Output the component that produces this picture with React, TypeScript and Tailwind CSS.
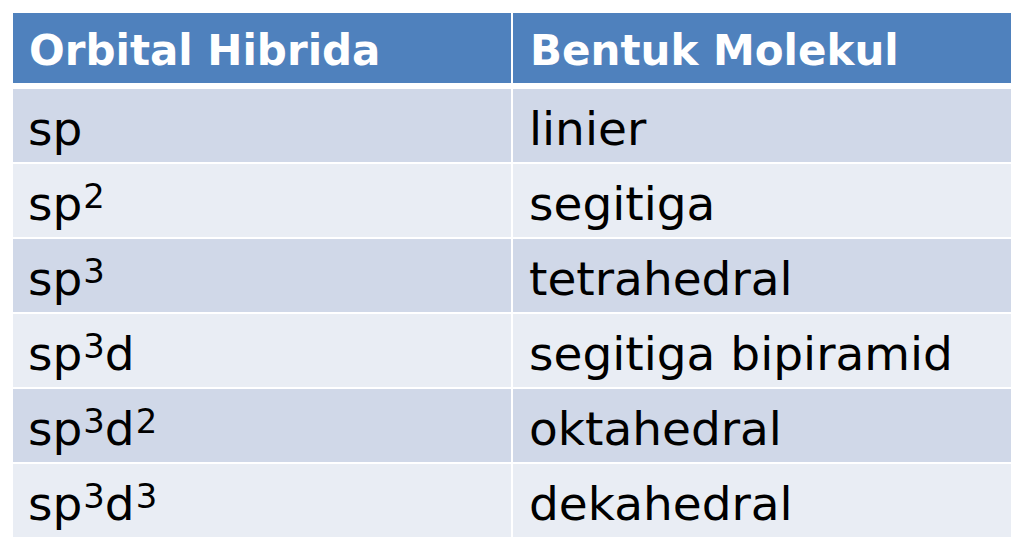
const Sup = ({ children }: { children: React.ReactNode }) => (
  <sup className="text-[0.72em] top-[-0.36em] ml-[1px]">{children}</sup>
)

const rows: { orbital: React.ReactNode; shape: string }[] = [
  { orbital: 'sp', shape: 'linier' },
  { orbital: <>sp<Sup>2</Sup></>, shape: 'segitiga' },
  { orbital: <>sp<Sup>3</Sup></>, shape: 'tetrahedral' },
  { orbital: <>sp<Sup>3</Sup>d</>, shape: 'segitiga bipiramid' },
  { orbital: <>sp<Sup>3</Sup>d<Sup>2</Sup></>, shape: 'oktahedral' },
  { orbital: <>sp<Sup>3</Sup>d<Sup>3</Sup></>, shape: 'dekahedral' },
]

export default function App() {
  return (
    <div className="w-[1024px] h-[549px] bg-white pt-[13px] pl-[13px] font-['DejaVu_Sans',sans-serif]">
      <div className="w-[998px] flex flex-col">
        {/* header */}
        <div className="grid grid-cols-2 gap-[2px] h-[70px] mb-[6px]">
          <div className="bg-[#4f81bd] text-white font-bold text-[42px] px-[16px] pt-[4px] flex items-center">Orbital Hibrida</div>
          <div className="bg-[#4f81bd] text-white font-bold text-[42px] px-[17px] pt-[4px] flex items-center">Bentuk Molekul</div>
        </div>
        {/* body rows */}
        <div className="flex flex-col gap-[2px]">
          {rows.map((r, i) => (
            <div key={i} className="grid grid-cols-2 gap-[2px] h-[73px]">
              <div className={`${i % 2 === 0 ? 'bg-[#d0d8e8]' : 'bg-[#e9edf4]'} text-black text-[47px] px-[15px] pt-[6px] flex items-center leading-none`}>
                <span>{r.orbital}</span>
              </div>
              <div className={`${i % 2 === 0 ? 'bg-[#d0d8e8]' : 'bg-[#e9edf4]'} text-black text-[47px] px-[16px] pt-[6px] flex items-center leading-none`}>
                {r.shape}
              </div>
            </div>
          ))}
        </div>
      </div>
    </div>
  )
}
